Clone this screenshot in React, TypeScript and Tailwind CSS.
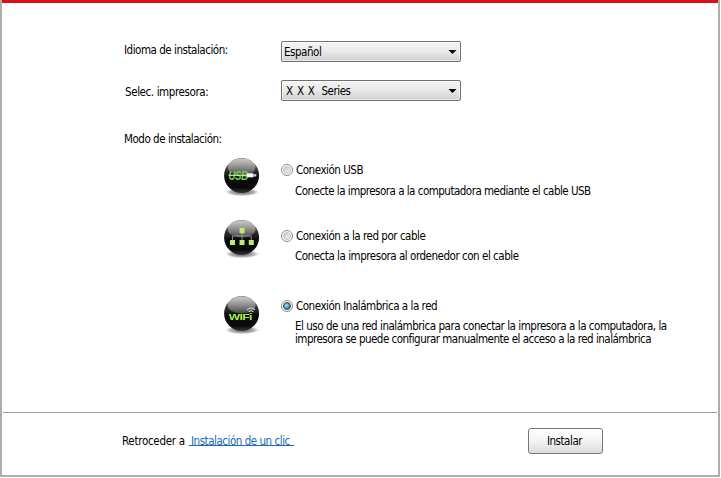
import { ReactNode, useState } from "react";

type Mode = "usb" | "wired" | "wifi";

function Orb({ id, children }: { id: Mode; children: ReactNode }) {
  return (
    <svg className="block h-[42px] w-[42px] shrink-0" viewBox="0 0 42 42">
      <defs>
        <linearGradient id={`${id}-body`} x1="0" y1="0" x2="0" y2="1">
          <stop offset="0" stopColor="#777" />
          <stop offset="0.3" stopColor="#3a3a3a" />
          <stop offset="0.55" stopColor="#0c0c0c" />
          <stop offset="0.85" stopColor="#0a0a0a" />
          <stop offset="1" stopColor="#3a3a3a" />
        </linearGradient>
        <linearGradient id={`${id}-gloss`} x1="0" y1="0" x2="0" y2="1">
          <stop offset="0" stopColor="#fff" stopOpacity="0.6" />
          <stop offset="1" stopColor="#fff" stopOpacity="0.2" />
        </linearGradient>
        <radialGradient id={`${id}-shadow`}>
          <stop offset="0" stopColor="#333" stopOpacity="0.85" />
          <stop offset="0.7" stopColor="#666" stopOpacity="0.5" />
          <stop offset="1" stopColor="#888" stopOpacity="0" />
        </radialGradient>
      </defs>
      <ellipse cx="21.2" cy="35" rx="17" ry="4.2" fill={`url(#${id}-shadow)`} />
      <circle cx="20.6" cy="18.5" r="17.5" fill={`url(#${id}-body)`} />
      <ellipse cx="20.6" cy="10" rx="14" ry="8.4" fill={`url(#${id}-gloss)`} />
      {children}
    </svg>
  );
}

function UsbIcon() {
  return (
    <Orb id="usb">
      <text x="7.6" y="22.7" textLength="19" lengthAdjust="spacingAndGlyphs" fontFamily="Liberation Sans, sans-serif" fontSize="12" fontWeight="700" fontStyle="italic" fill="#6fcf4a">USB</text>
      <path d="M7.5 18.3H27" stroke="#c9e6bd" strokeWidth="1.2" />
      <path d="M26 16.3H32.5V20.3H26Z" fill="#fafafa" />
      <path d="M32.5 17.2H35.3V19.5H32.5Z" fill="#cfcfcf" />
    </Orb>
  );
}

function NetworkIcon() {
  return (
    <Orb id="wired">
      <path d="M21 13V22M11.5 22V17H30.2V22" fill="none" stroke="#a8aaa5" strokeWidth="0.8" />
      <path d="M18.6 9h5v5.2h-5ZM9 21h5v5h-5ZM18.5 21h5v5h-5ZM27.8 21h5v5h-5Z" fill="#c3e878" />
    </Orb>
  );
}

function WifiIcon() {
  return (
    <Orb id="wifi">
      <text x="7.8" y="25.4" textLength="23" lengthAdjust="spacingAndGlyphs" fontFamily="Liberation Sans, sans-serif" fontSize="9.8" fontWeight="700" fill="#a8ed43">WIFi</text>
      <g fill="none" stroke="#d5d9d2" strokeWidth="1.1" strokeLinecap="round">
        <path d="M26.4 14.6Q30 11.4 33.6 14.6" />
        <path d="M28 16.6Q30 15 32 16.6" />
      </g>
    </Orb>
  );
}

function Radio({ checked }: { checked: boolean }) {
  return (
    <span className="flex size-3 shrink-0 items-center justify-center rounded-full border border-[#868a8d] bg-white">
      <span
        className={
          checked
            ? "size-2 rounded-full border border-[#1b4668] bg-radial-[at_40%_40%] from-[#a5e6ff] to-[#124572]"
            : "size-2 rounded-full border border-[#bfc3c7] bg-linear-to-br from-[#c3c6ca] to-[#f7f7f7]"
        }
      />
    </span>
  );
}

function Select({ children }: { children: ReactNode }) {
  return (
    <button className="flex h-[21px] w-[180px] items-center justify-between rounded-[2px] border border-[#707070] bg-linear-to-b from-[#f4f4f4] via-[#e9e9e9] via-50% to-[#cfcfcf] pr-[3px] pl-[2px] text-left shadow-[inset_0_0_0_1px_rgba(255,255,255,0.55)]">
      {children}
      <svg className="h-1 w-[9px]" viewBox="0 0 9 4">
        <path d="M0.5 0H8.5L4.5 4Z" fill="#000" />
      </svg>
    </button>
  );
}

function Option({ icon, title, checked, onSelect, children }: { icon: ReactNode; title: ReactNode; checked: boolean; onSelect: () => void; children: ReactNode }) {
  return (
    <div className="flex h-[52px] items-end">
      <div className="self-start">{icon}</div>
      <div className="ml-[18px]">
        <button className="flex h-4 items-center gap-[3px] tracking-[-0.47px]" onClick={onSelect}>
          <Radio checked={checked} />
          {title}
        </button>
        <div className="pl-[14px]">{children}</div>
      </div>
    </div>
  );
}

export default function App() {
  const [mode, setMode] = useState<Mode>("wifi");
  return (
    <div className="h-[478px] w-[721px] overflow-hidden bg-white font-['DejaVu_Sans_Condensed','DejaVu_Sans',sans-serif] text-[11.5px] leading-4 font-normal tracking-[-0.47px] whitespace-nowrap text-black [font-stretch:condensed]">
      <div className="flex h-[477px] w-[720px] flex-col border-r-2 border-b-2 border-l-2 border-[#adadad] bg-white">
        <div className="h-[3px] shrink-0 bg-[#dc0c18]" />
        <main className="flex h-[409px] shrink-0 flex-col pl-[122px]">
          <div className="mt-[38px] flex h-[21px]">
            <div className="w-[157px] pt-px">Idioma de instalación:</div>
            <Select><span className="pt-px">Español</span></Select>
          </div>
          <div className="mt-[18px] flex h-[21px]">
            <div className="w-[157px] pt-1 pl-px tracking-[-0.4px]">Selec. impresora:</div>
            <Select><span className="pt-px pl-[2px]"><span className="mr-[7px] [word-spacing:1.5px]">X X X</span>Series</span></Select>
          </div>
          <div className="mt-[30px] h-4">Modo de instalación:</div>
          <div className="mt-[10px] pl-[97px]">
            <div className="h-[62px]">
              <Option icon={<UsbIcon />} title="Conexión USB" checked={mode === "usb"} onSelect={() => setMode("usb")}>
                <p className="mt-[5px] mb-[10px] tracking-[-0.51px]">Conecte la impresora a la computadora mediante el cable USB</p>
              </Option>
            </div>
            <div className="h-[76px]">
              <Option icon={<NetworkIcon />} title="Conexión a la red por cable" checked={mode === "wired"} onSelect={() => setMode("wired")}>
                <p className="mt-1 mb-[7px]">Conecta la impresora al ordenedor con el cable</p>
              </Option>
            </div>
            <Option icon={<WifiIcon />} title="Conexión Inalámbrica a la red" checked={mode === "wifi"} onSelect={() => setMode("wifi")}>
              <p className="mt-[6px] leading-[13px]">El uso de una red inalámbrica para conectar la impresora a la computadora, la</p>
              <p className="mb-px leading-[13px] tracking-[-0.51px]">impresora se puede configurar manualmente el acceso a la red inalámbrica</p>
            </Option>
          </div>
        </main>
        <footer className="mr-px ml-px flex flex-1 items-start border-t border-[#9b9b9b] pl-[119px]">
          <div className="mt-5 w-[67px] tracking-[-0.3px]">Retroceder a</div>
          <a className="mt-5 h-[13px] w-[105px] border-b border-[#1a6cb4] pl-[2px] leading-4 text-[#1a6cb4]" href="#">Instalación de un clic</a>
          <button className="mt-[15px] ml-[234px] h-[26px] w-[75px] rounded-[3px] border border-[#777] bg-linear-to-b from-white via-[#f3f3f3] via-50% to-[#d8dadd] pr-[2px]">Instalar</button>
        </footer>
      </div>
    </div>
  );
}
